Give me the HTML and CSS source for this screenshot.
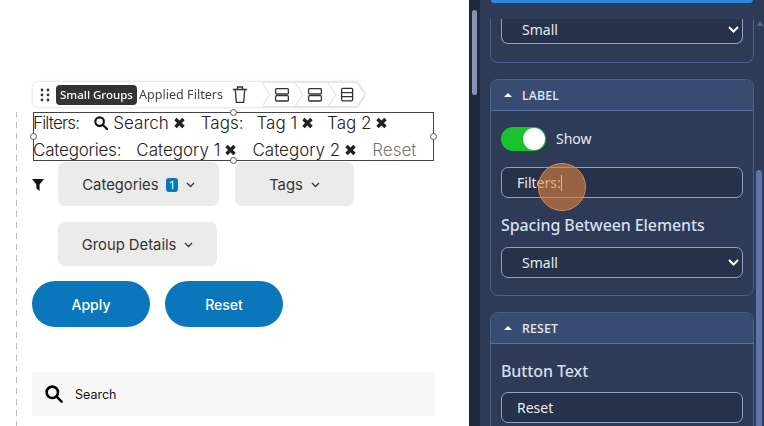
FILE: index.html
```html
<!DOCTYPE html>
<html lang="en">
<head>
<meta charset="utf-8">
<title>Applied Filters</title>
<link rel="stylesheet" href="styles.css">
</head>
<body>
<div class="page">
  <main class="canvas">
    <div class="toolbar">
      <div class="tool-main">
        <svg class="grip" width="10" height="14" viewBox="0 0 10 14"><g fill="#333"><circle cx="2" cy="2" r="1.4"/><circle cx="8" cy="2" r="1.4"/><circle cx="2" cy="7" r="1.4"/><circle cx="8" cy="7" r="1.4"/><circle cx="2" cy="12" r="1.4"/><circle cx="8" cy="12" r="1.4"/></g></svg>
        <span class="tag">Small Groups</span>
        <span class="tool-name">Applied Filters</span>
        <svg class="trash" width="14" height="17" viewBox="0 0 14 17" fill="none" stroke="#333" stroke-width="1.3"><path d="M0 3.5h14M4.5 3.5V1h5v2.5M2.3 3.5l1 12.8h7.4l1-12.8"/></svg>
      </div>
      <svg class="tip" width="9" height="25" viewBox="0 0 9 25"><path class="crumb-shape" d="M0 .5l8 12-8 12"/></svg>
      <svg class="crumb" width="42" height="25" viewBox="0 0 42 25"><path class="crumb-shape" d="M0 .5h33l8 12-8 12H0l8-12z"/><g class="crumb-icon"><rect x="13.6" y="6.6" width="12.8" height="5.4" rx="1"/><rect x="13.6" y="13.6" width="12.8" height="5.4" rx="1"/></g></svg>
      <svg class="crumb" width="42" height="25" viewBox="0 0 42 25"><path class="crumb-shape" d="M0 .5h33l8 12-8 12H0l8-12z"/><g class="crumb-icon"><rect x="13.6" y="6.6" width="12.8" height="5.4" rx="1"/><rect x="13.6" y="13.6" width="12.8" height="5.4" rx="1"/></g></svg>
      <svg class="crumb" width="38" height="25" viewBox="0 0 38 25"><path class="crumb-shape" d="M0 .5h29l8 12-8 12H0l8-12z"/><g class="crumb-icon"><rect x="13.6" y="6.4" width="11" height="12.4" rx="1"/><path d="M13.6 10.6h11M13.6 14.6h11"/></g></svg>
    </div>

    <div class="content">
      <div class="applied">
        <span class="handle handle-top"></span>
        <span class="handle handle-left"></span>
        <span class="handle handle-right"></span>
        <span class="handle handle-bottom"></span>
        <div class="applied-line line-first">
          <span class="label label-filters">Filters:</span>
          <span class="chip"><svg class="search-small" width="14" height="14" viewBox="0 0 15 15" fill="none" stroke="#111" stroke-width="2.3"><circle cx="6" cy="6" r="4.6"/><path d="M9.6 9.6l4.4 4.4" stroke-linecap="round"/></svg>Search<svg class="x" width="13" height="12" viewBox="0 0 13 12"><path d="M2.5 2l8 8M10.5 2l-8 8"/></svg></span>
          <span class="label label-tags">Tags:</span>
          <span class="chip chip-tight">Tag 1<svg class="x" width="13" height="12" viewBox="0 0 13 12"><path d="M2.5 2l8 8M10.5 2l-8 8"/></svg></span>
          <span class="chip">Tag 2<svg class="x" width="13" height="12" viewBox="0 0 13 12"><path d="M2.5 2l8 8M10.5 2l-8 8"/></svg></span>
        </div>
        <div class="applied-line">
          <span class="label label-categories">Categories:</span>
          <span class="chip">Category 1<svg class="x" width="13" height="12" viewBox="0 0 13 12"><path d="M2.5 2l8 8M10.5 2l-8 8"/></svg></span>
          <span class="chip">Category 2<svg class="x" width="13" height="12" viewBox="0 0 13 12"><path d="M2.5 2l8 8M10.5 2l-8 8"/></svg></span>
          <span class="reset-link">Reset</span>
        </div>
      </div>

      <div class="filters">
        <svg class="funnel" width="12" height="12" viewBox="0 0 12 12"><path d="M0 0h12L7.6 5.5V12L4.4 9.6V5.5z" fill="#111"/></svg>
        <div class="dropdowns">
          <div class="dropdown dd-cat">Categories <span class="count">1</span><svg class="chev" width="9" height="6" viewBox="0 0 9 6" fill="none" stroke="#333" stroke-width="1.3"><path d="M1 1l3.5 3.5L8 1"/></svg></div>
          <div class="dropdown dd-tags">Tags<svg class="chev" width="9" height="6" viewBox="0 0 9 6" fill="none" stroke="#333" stroke-width="1.3"><path d="M1 1l3.5 3.5L8 1"/></svg></div>
          <div class="dropdown dd-group">Group Details<svg class="chev" width="9" height="6" viewBox="0 0 9 6" fill="none" stroke="#333" stroke-width="1.3"><path d="M1 1l3.5 3.5L8 1"/></svg></div>
        </div>
      </div>

      <div class="actions">
        <button class="pill">Apply</button>
        <button class="pill">Reset</button>
      </div>

      <div class="search-bar">
        <svg width="18" height="18" viewBox="0 0 18 18" fill="none" stroke="#000" stroke-width="2.6"><circle cx="7.3" cy="7.3" r="5.7"/><path d="M11.6 11.6l5 5" stroke-linecap="round"/></svg>
        <span>Search</span>
      </div>
    </div>
  </main>

  <aside class="strip"><div class="strip-thumb"></div></aside>

  <section class="panel">
    <div class="panel-top"><div class="blue-btn"></div></div>
    <div class="card card-cut">
      <div class="field select">Small<svg class="sel-chev" width="11" height="7" viewBox="0 0 11 7" fill="none" stroke="#fff" stroke-width="2"><path d="M1 1l4.5 4.5L10 1"/></svg></div>
    </div>
    <div class="card card-label">
      <div class="card-head"><span class="caret-up"></span>LABEL</div>
      <div class="card-body">
        <div class="toggle-row"><span class="toggle"><span class="knob"></span></span><span class="toggle-text">Show</span></div>
        <div class="field text">Filters:<span class="text-caret"></span></div>
        <div class="heading">Spacing Between Elements</div>
        <div class="field select">Small<svg class="sel-chev" width="11" height="7" viewBox="0 0 11 7" fill="none" stroke="#fff" stroke-width="2"><path d="M1 1l4.5 4.5L10 1"/></svg></div>
      </div>
    </div>
    <div class="card card-open">
      <div class="card-head"><span class="caret-up"></span>RESET</div>
      <div class="card-body card-body-tight">
        <div class="heading heading-first">Button Text</div>
        <div class="field text">Reset</div>
      </div>
    </div>
    <span class="click-ring"></span>
  </section>

  <aside class="rail"><span class="rail-arrow"></span><div class="rail-thumb"></div></aside>
</div>
</body>
</html>
```

FILE: styles.css
```css
* { box-sizing: border-box; }
html, body { margin: 0; height: 100%; overflow: hidden; background: #fff; }
.page { display: flex; width: 764px; height: 426px; overflow: hidden; font-family: "Noto Sans", sans-serif; }

/* canvas */
.canvas { width: 469px; flex: none; padding: 82px 0 0 16px; background: #fff; }
.toolbar { display: flex; align-items: flex-start; height: 25px; margin: 0 0 5px 17px; filter: drop-shadow(0 0 1.5px rgba(0,0,0,.2)); }
.tool-main { display: flex; align-items: center; flex: none; width: 229px; height: 25px; padding-left: 7px; background: #fff; border-radius: 6px 0 0 6px; }
.grip { flex: none; margin-right: 6px; }
.tag { background: #333; color: #fff; font-size: 11.5px; font-weight: 500; line-height: 20px; padding: 0 4px; border-radius: 4px; margin-right: 2px; white-space: nowrap; }
.tool-name { color: #444; font-size: 12.6px; white-space: nowrap; }
.trash { flex: none; margin-left: 10px; }
.tip { flex: none; margin-right: -9px; }
.tip .crumb-shape { fill: #fff; stroke: #e2e2e2; }
.crumb { flex: none; margin-right: -9px; }
.crumb-shape { fill: #fff; stroke: #e2e2e2; stroke-width: 1; }
.crumb-icon { fill: none; stroke: #333; stroke-width: 1.3; }

.content { border-left: 1px dashed #bbb; border-image: repeating-linear-gradient(#bbb 0 6px, transparent 6px 11px) 1; padding: 0 34px 0 15px; height: 319px; }

.applied { position: relative; width: 401px; height: 49px; margin-left: 1px; border: 1px solid #444; font-family: Inter, sans-serif; font-size: 17px; font-weight: 300; color: #222; }
.applied-line { display: flex; align-items: center; height: 26px; white-space: nowrap; margin-left: -1px; }
.line-first { margin-top: -3px; margin-bottom: 1px; }
.label { margin-right: 15px; }
.label-filters { letter-spacing: -.8px; margin-right: 15px; }
.label-tags { margin-right: 13px; }
.label-categories { letter-spacing: -.2px; }
.chip { display: inline-flex; align-items: center; margin-right: 15px; }
.chip-tight { margin-right: 13px; }
.search-small { margin-right: 5px; }
.x { margin-left: 4px; }
.x path { stroke: #222; stroke-width: 3.4; fill: none; }
.reset-link { color: #777; }
.handle { position: absolute; width: 7px; height: 7px; border: 1.5px solid #556; border-radius: 50%; background: #fff; }
.handle-top { top: -4px; left: 196px; }
.handle-bottom { bottom: -4px; left: 196px; }
.handle-left { top: 20px; left: -4px; }
.handle-right { top: 20px; right: -4px; }

.filters { display: flex; align-items: flex-start; margin-top: 1px; }
.funnel { flex: none; margin: 17px 14px 0 0; }
.dropdowns { display: flex; flex-wrap: wrap; gap: 16px; width: 340px; }
.dropdown { display: flex; align-items: center; justify-content: center; height: 44px; padding-top: 2px; background: #ebebeb; border-radius: 7px; font-family: Inter, sans-serif; font-size: 14.8px; color: #333; white-space: pre; }
.dd-cat { width: 161px; }
.dd-tags { width: 119px; }
.dd-group { width: 159px; }
.count { display: inline-block; width: 12px; height: 14px; margin-left: 3px; background: #0a76bb; color: #fff; font-size: 11px; line-height: 14px; text-align: center; border-radius: 3px; }
.chev { margin-left: 8px; }

.actions { display: flex; gap: 15px; margin-top: 15px; }
.pill { width: 118px; height: 46px; padding: 0; border: 0; border-radius: 23px; background: #0a76bb; color: #fff; font-family: Inter, sans-serif; font-size: 14px; font-weight: 500; }
.search-bar { display: flex; align-items: center; gap: 12px; width: 403px; height: 44px; margin-top: 45px; padding-left: 13px; background: #f8f8f8; font-family: Inter, sans-serif; font-size: 12.5px; color: #111; }

/* side strip */
.strip { width: 11px; flex: none; padding: 10px 3px 0; background: #1e2a3c; }
.strip-thumb { width: 5px; height: 85px; background: #8494b1; border-radius: 3px; }

/* panel */
.panel { position: relative; width: 276px; flex: none; padding: 0 2px 0 10px; background: #2d3b57; color: #e6ebf3; font-size: 14px; overflow: hidden; }
.panel-top { height: 19px; }
.blue-btn { height: 3px; margin: 0 1px; background: #2f87dc; border-radius: 0 0 4px 4px; }
.card { border: 1px solid #4c6189; border-radius: 8px; margin-bottom: 16px; }
.card-cut { border-top: 0; border-radius: 0 0 8px 8px; padding: 0 10px 18px; height: 44px; }
.card-label { height: 217px; }
.card-open { margin-bottom: 0; height: 140px; }
.card-head { display: flex; align-items: center; height: 31px; padding-left: 13px; background: #384b71; border-bottom: 1px solid #5a70a0; border-radius: 8px 8px 0 0; font-size: 12.3px; font-weight: 500; letter-spacing: .2px; }
.caret-up { width: 0; height: 0; margin-right: 10px; border: 4px solid transparent; border-top: 0; border-bottom-color: #fff; }
.card-body { padding: 16px 10px 0; }
.card-body-tight { padding-top: 15px; }
.toggle-row { display: flex; align-items: center; gap: 10px; height: 24px; margin-bottom: 16px; }
.toggle-text { padding-bottom: 2px; }
.toggle { display: flex; justify-content: flex-end; align-items: center; width: 45px; height: 24px; padding-right: 1px; background: #17c22e; border-radius: 12px; }
.knob { width: 22px; height: 22px; background: #fff; border-radius: 50%; }
.field { display: flex; align-items: center; height: 31px; background: #26324a; border: 1px solid #8fa3c4; border-radius: 7px; font-size: 14px; color: #e6ebf3; }
.field.text { padding-left: 15px; }
.field.select { justify-content: space-between; padding: 0 3px 0 20px; }
.card-cut .field { height: 25px; padding-bottom: 4px; border-top: 0; border-radius: 0 0 7px 7px; }
.text-caret { width: 1px; height: 16px; background: #fff; }
.heading { margin: 15px 0 10px; font-size: 16px; font-weight: 500; letter-spacing: -.1px; line-height: 24px; color: #d5dfef; }
.heading-first { margin: 0 0 9px; }
.click-ring { position: absolute; left: 58px; top: 163px; width: 48px; height: 48px; border: 1.5px solid #d98a4a; border-radius: 50%; background: rgba(226,130,60,.6); }

.rail { position: relative; width: 8px; flex: none; background: #2d3b57; }
.rail-arrow { position: absolute; left: 1px; top: 21px; width: 0; height: 0; border: 3.5px solid transparent; border-top: 0; border-bottom: 5px solid #56698c; }
.rail-thumb { position: absolute; left: 0; top: 170px; width: 6px; height: 256px; background: #5c76a8; border-radius: 3px 3px 0 0; }
```
